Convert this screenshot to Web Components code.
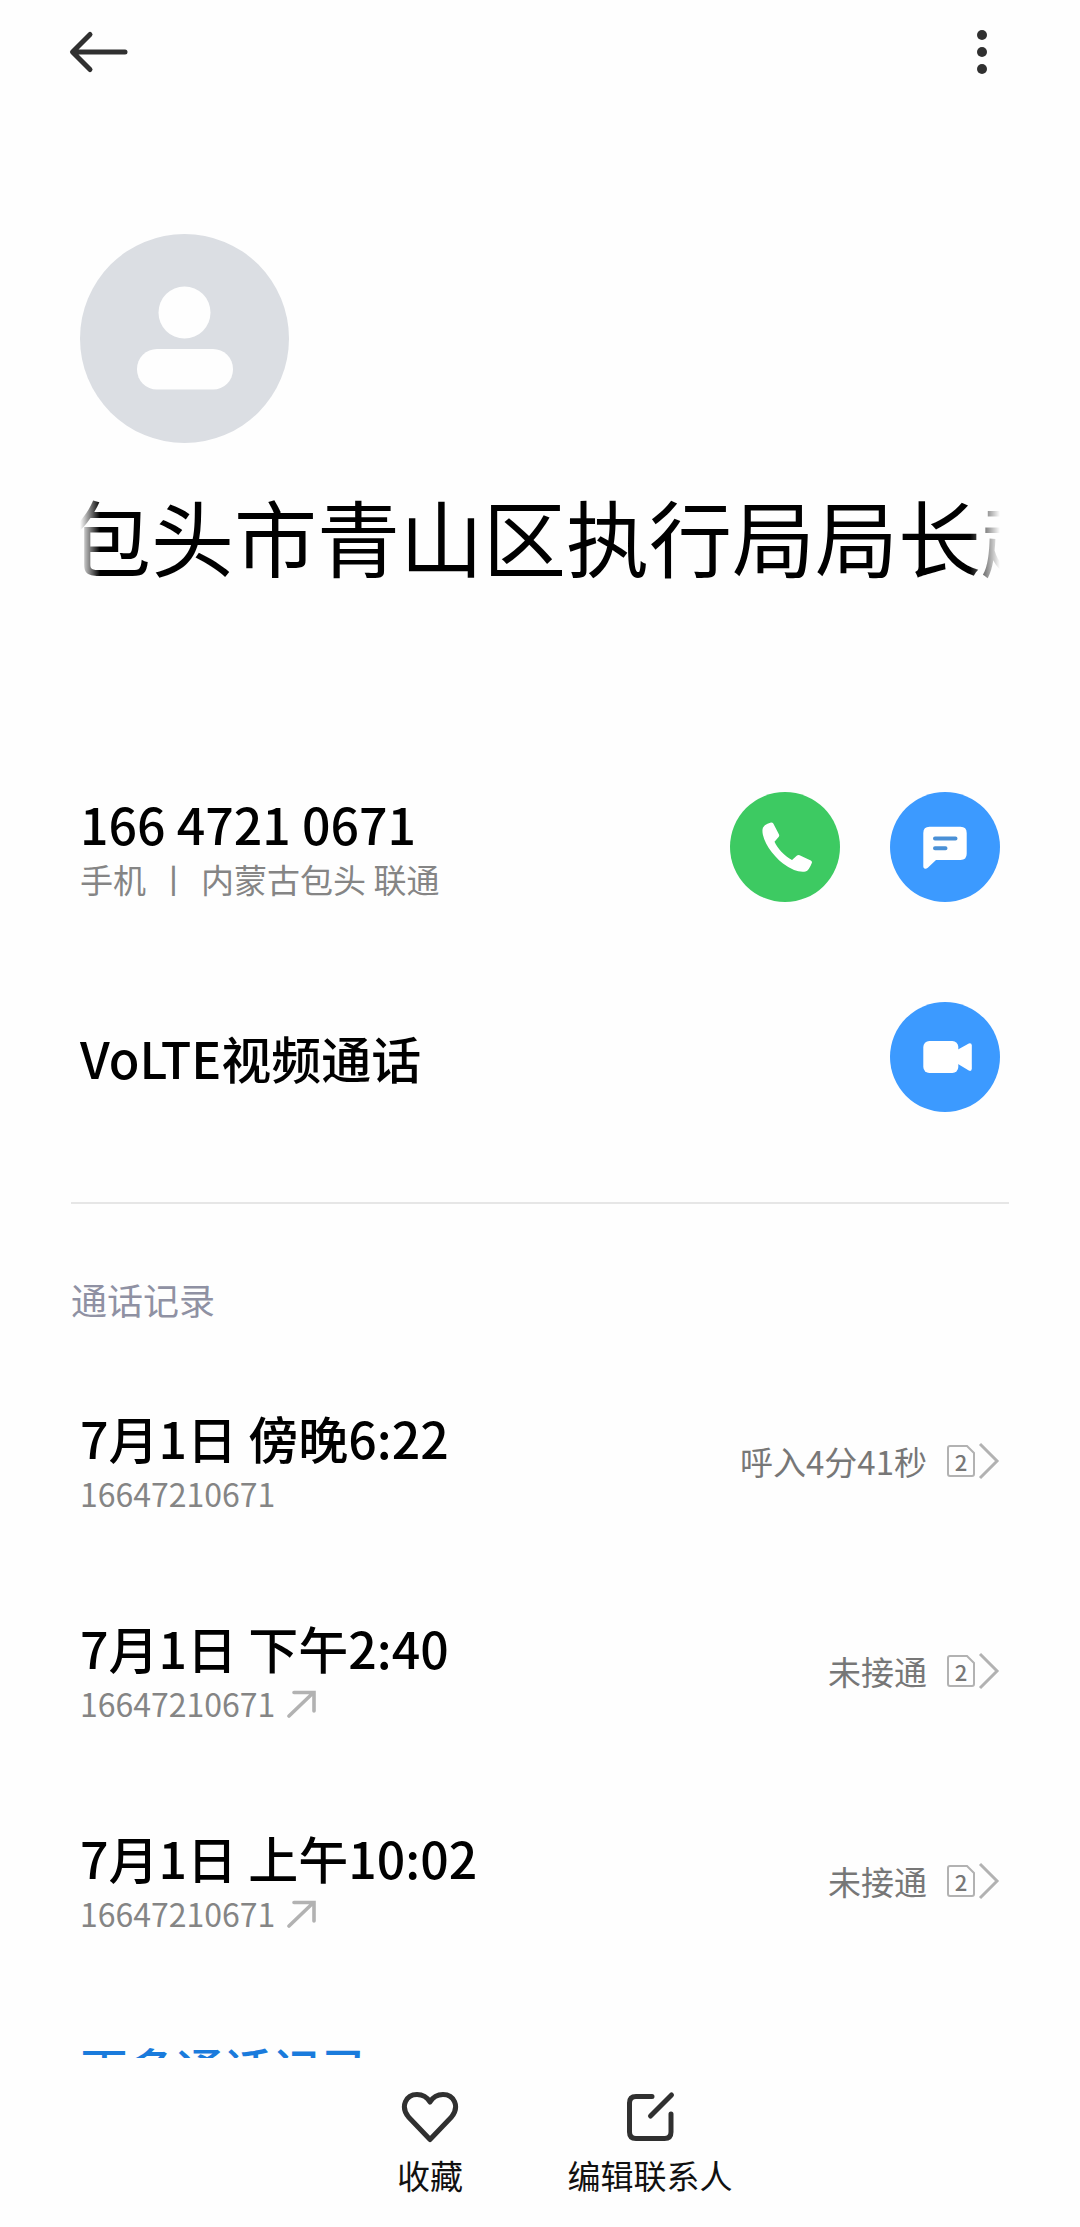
<!DOCTYPE html>
<html lang="zh-CN">
<head>
<meta charset="utf-8">
<meta name="viewport" content="width=device-width, initial-scale=1">
<title>联系人详情</title>
<style>
  html, body { margin: 0; height: 100%; }
  body {
    background: #fefefe;
    color: #000;
    font-family: "Noto Sans CJK SC", "Noto Sans", sans-serif;
    --muted: #858585;
    --faint: #b2b2b2;
    --ink: #303030;
    --blue: #3c9aff;
    --green: #3dca62;
  }
</style>
</head>
<body>
<contact-page>
  <top-bar slot="top"></top-bar>
  <contact-hero>包头市青山区执行局局长赵</contact-hero>
  <contact-method>
    166 4721 0671
    <span slot="type">手机</span>
    <span slot="place">内蒙古包头 联通</span>
    <round-action slot="actions" kind="call" label="拨打电话"></round-action>
    <round-action slot="actions" kind="message" label="发送短信"></round-action>
  </contact-method>
  <contact-method>
    VoLTE视频通话
    <round-action slot="actions" kind="video" label="视频通话"></round-action>
  </contact-method>
  <call-history>
    <span slot="heading">通话记录</span>
    <call-record number="16647210671" status="呼入4分41秒" sim="2">7月1日 傍晚6:22</call-record>
    <call-record number="16647210671" status="未接通" sim="2" outgoing>7月1日 下午2:40</call-record>
    <call-record number="16647210671" status="未接通" sim="2" outgoing>7月1日 上午10:02</call-record>
    <span slot="more">更多通话记录</span>
  </call-history>
  <bottom-bar slot="bottom">
    <bar-item icon="heart">收藏</bar-item>
    <bar-item icon="edit">编辑联系人</bar-item>
  </bottom-bar>
</contact-page>

<script>
const RESET = `
  * { box-sizing: border-box; }
  button, a { font: inherit; color: inherit; background: none; border: 0; padding: 0; margin: 0; text-decoration: none; cursor: pointer; }
  svg { display: block; }
`;

function define(name, render) {
  customElements.define(name, class extends HTMLElement {
    constructor() {
      super();
      this.attachShadow({ mode: 'open' });
    }
    connectedCallback() {
      const t = document.createElement('template');
      t.innerHTML = render(this);
      this.shadowRoot.replaceChildren(t.content.cloneNode(true));
    }
  });
}

define('contact-page', () => `
  <style>${RESET}
    :host { display: flex; flex-direction: column; height: 100vh; }
    main { flex: 1; min-height: 0; overflow: hidden; }
  </style>
  <slot name="top"></slot>
  <main><slot></slot></main>
  <slot name="bottom"></slot>
`);

define('top-bar', () => `
  <style>${RESET}
    :host { display: block; }
    header { display: flex; justify-content: space-between; align-items: center; padding: 22px 68px; }
    button { height: 60px; display: flex; align-items: center; }
  </style>
  <header>
    <button aria-label="返回">
      <svg width="60" height="44" viewBox="0 0 60 44" fill="none" stroke="#303030" stroke-width="5" stroke-linecap="round" stroke-linejoin="round"><path d="M22 4.500L4.500 22L22 39.500M5 22H57"/></svg>
    </button>
    <button aria-label="更多">
      <svg width="60" height="44" viewBox="0 0 60 44" fill="#303030"><circle cx="30" cy="5" r="5"/><circle cx="30" cy="22" r="5"/><circle cx="30" cy="39" r="5"/></svg>
    </button>
  </header>
`);

define('contact-hero', () => `
  <style>${RESET}
    :host { display: block; padding: 130px 80px 152px; }
    h1 {
      margin: 36px 0 0;
      font-size: 83px; line-height: 110px; font-weight: 400;
      white-space: nowrap; overflow: hidden; text-indent: -12px;
      -webkit-mask-image: linear-gradient(to right, transparent, #000 20px, #000 calc(100% - 30px), transparent);
      mask-image: linear-gradient(to right, transparent, #000 20px, #000 calc(100% - 30px), transparent);
    }
  </style>
  <svg width="210" height="210" viewBox="0 0 210 210" role="img" aria-label="头像">
    <circle cx="104.500" cy="104.500" r="104.500" fill="#dbdee3"/>
    <circle cx="104.500" cy="78.500" r="26" fill="#fefefe"/>
    <rect x="57" y="115" width="96" height="40.500" rx="20" fill="#fefefe"/>
  </svg>
  <h1><slot></slot></h1>
`);

define('contact-method', el => `
  <style>${RESET}
    :host { display: flex; align-items: center; justify-content: space-between; height: 210px; padding: 0 80px; }
    h2 { margin: 0; font-size: 50px; line-height: 64px; font-weight: 500; }
    p { margin: 0; display: flex; gap: 11px; font-size: 33px; line-height: 48px; color: var(--muted); }
    .actions { display: flex; gap: 50px; }
  </style>
  <div>
    <h2><slot></slot></h2>
    ${el.querySelector('[slot=type]') ? '<p><slot name="type"></slot><span>丨</span><slot name="place"></slot></p>' : ''}
  </div>
  <div class="actions"><slot name="actions"></slot></div>
`);

const GLYPHS = {
  call: `<path fill="#fff" d="M32.500 37.500Q33 32.500 41 30.400Q42.500 30.200 43.300 31.600L49 42.400Q49.600 43.800 48.600 45L44.500 49.800C47.500 56.500 54 63.500 62 68L67 63.600Q68.200 62.800 69.600 63.300L80.800 68.500Q82.400 69.400 81.800 71Q79 78.500 75.500 79.600Q66 81.200 53 71.500C42 63 31.600 48 32.500 37.500Z"/>`,
  message: `<path fill="#fff" d="M39.500 34.700H70.500Q76.700 34.700 76.700 41V61.800Q76.700 68 70.500 68H46L37.800 75.800Q36 77.200 34.500 76.600Q33.300 76 33.300 74.500V41Q33.300 34.700 39.500 34.700Z"/><path fill="none" stroke="#4a90d6" stroke-width="4" stroke-linecap="round" d="M45 46.500H65.500M45 56.300H55.500"/>`,
  video: `<rect x="33.300" y="39" width="35" height="32" rx="6" fill="#fff"/><path fill="#fff" d="M68 47.500L78.800 41.500Q81.800 40.800 81.800 43.500V66.500Q81.800 69.800 78.800 68.600L68 62Z"/>`
};

define('round-action', el => {
  const kind = el.getAttribute('kind');
  return `
  <style>${RESET}
    :host { display: block; }
    button { display: block; width: 110px; height: 110px; border-radius: 50%; background: ${kind === 'call' ? 'var(--green)' : 'var(--blue)'}; }
  </style>
  <button aria-label="${el.getAttribute('label')}"><svg width="110" height="110" viewBox="0 0 110 110">${GLYPHS[kind]}</svg></button>`;
});

define('call-history', () => `
  <style>${RESET}
    :host { display: block; padding-top: 40px; }
    hr { margin: 0 71px; border: 0; border-top: 2px solid #e6e6e6; }
    h3 { margin: 70px 71px 32px; font-size: 36px; line-height: 50px; font-weight: 400; color: #8f91a3; }
    a { display: block; margin: 50px 80px 0; font-size: 48px; line-height: 64px; font-weight: 500; color: #1a7bdc; }
  </style>
  <hr>
  <h3><slot name="heading"></slot></h3>
  <slot></slot>
  <a href="#more"><slot name="more"></slot></a>
`);

define('call-record', el => `
  <style>${RESET}
    :host { display: block; }
    button { display: flex; width: 100%; height: 210px; align-items: center; justify-content: space-between; padding: 0 80px; text-align: left; }
    .when { display: block; font-size: 50px; line-height: 64px; font-weight: 500; white-space: pre; }
    .number { display: flex; align-items: center; gap: 12px; font-size: 32px; line-height: 48px; color: var(--muted); }
    .side { display: flex; align-items: center; font-size: 33px; line-height: 48px; color: #777; }
    .sim { display: grid; place-items: center; width: 28px; height: 32px; margin: 0 3px 0 20px; font-size: 22px; line-height: 30px; font-weight: 500; }
    .sim > * { grid-area: 1 / 1; }
  </style>
  <button>
    <span>
      <span class="when"><slot></slot></span>
      <span class="number">${el.getAttribute('number')}
        ${el.hasAttribute('outgoing') ? '<svg width="30" height="30" viewBox="0 0 30 30" fill="none" stroke="#b2b2b2" stroke-width="3.600" stroke-linecap="round"><path d="M2 28L26 5M7 4.500H27V23"/></svg>' : ''}
      </span>
    </span>
    <span class="side">
      <span>${el.getAttribute('status')}</span>
      <span class="sim">
        <svg width="28" height="32" viewBox="0 0 28 32" fill="none" stroke="#b2b2b2" stroke-width="2"><path d="M3 1H20L27 8V29Q27 31 25 31H3Q1 31 1 29V3Q1 1 3 1Z"/></svg>
        <span>${el.getAttribute('sim')}</span>
      </span>
      <svg width="22" height="38" viewBox="0 0 22 38" fill="none" stroke="#b2b2b2" stroke-width="3"><path d="M2 2L19 19L2 36"/></svg>
    </span>
  </button>
`);

define('bottom-bar', () => `
  <style>${RESET}
    :host { display: block; background: #fefefe; }
    nav { display: flex; justify-content: center; padding: 28px 0; }
  </style>
  <nav><slot></slot></nav>
`);

const BAR_ICONS = {
  heart: `<path d="M30 53.500L8.500 31C0 20.500 6 8.500 17 8.500C23 8.500 27 11 30 16C33 11 37 8.500 43 8.500C54 8.500 60 20.500 51.500 31Z"/>`,
  edit: `<path d="M32 10.500H16Q9.500 10.500 9.500 17V46Q9.500 52.500 16 52.500H44.500Q51 52.500 51 46V28M30.500 30L51.500 9"/>`
};

define('bar-item', el => `
  <style>${RESET}
    :host { display: block; width: 220px; }
    button { display: flex; flex-direction: column; align-items: center; gap: 5px; width: 100%; font-size: 33px; line-height: 48px; color: #111; }
  </style>
  <button>
    <svg width="60" height="60" viewBox="0 0 60 60" fill="none" stroke="#303030" stroke-width="5" stroke-linecap="round" stroke-linejoin="round">${BAR_ICONS[el.getAttribute('icon')]}</svg>
    <span><slot></slot></span>
  </button>
`);
</script>
</body>
</html>
